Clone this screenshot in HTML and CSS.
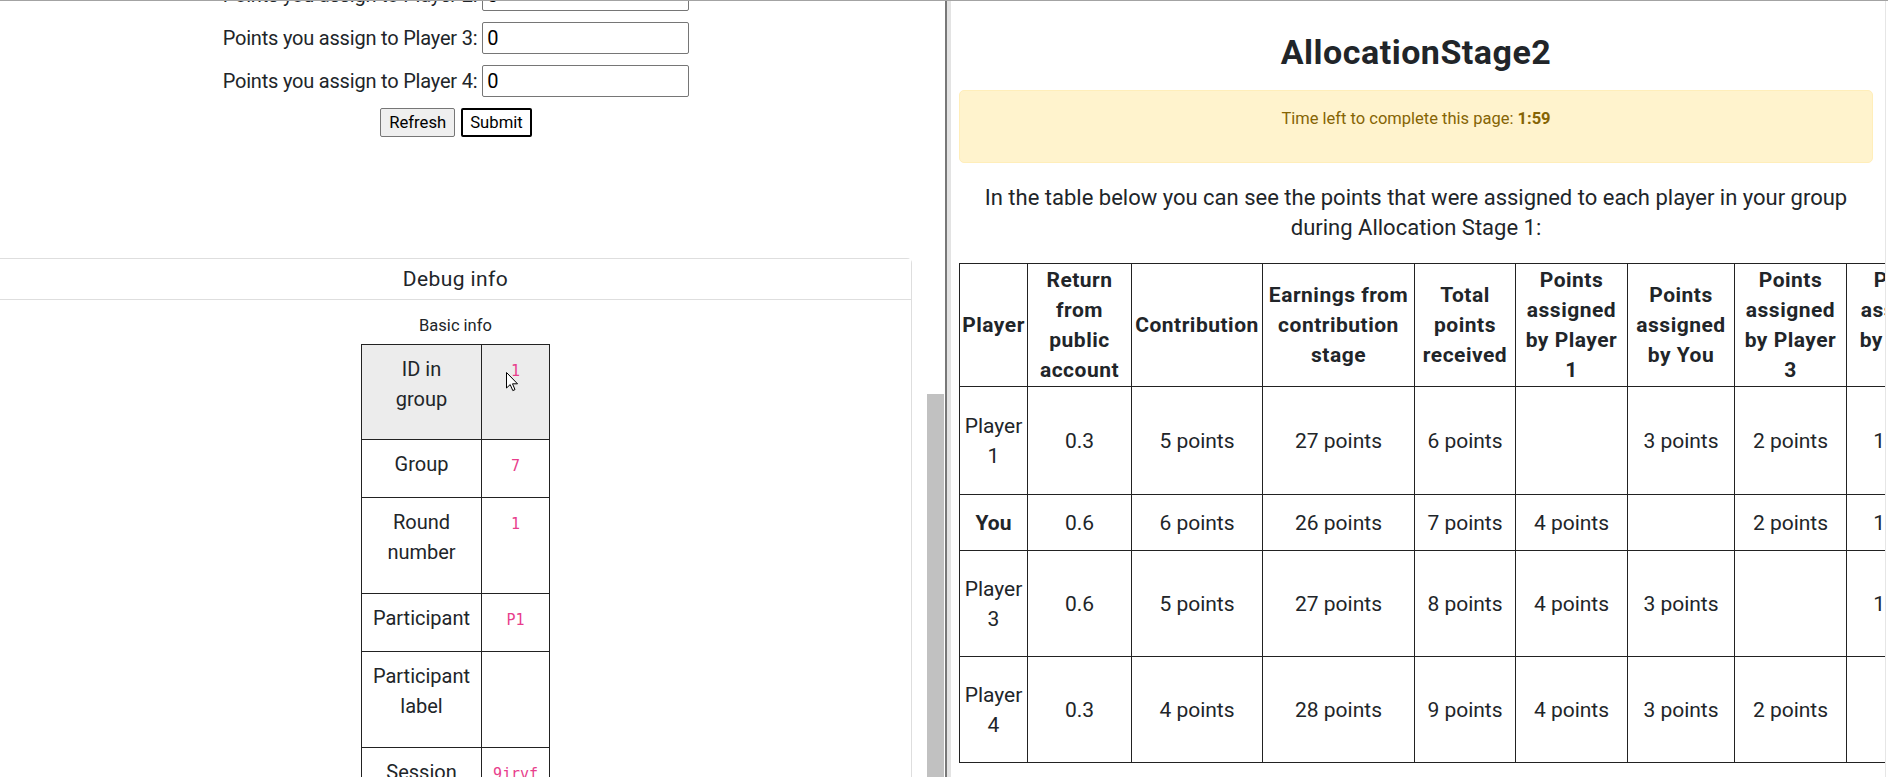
FILE: index.html
```html
<!DOCTYPE html>
<html lang="en">
<head>
<meta charset="utf-8">
<title>AllocationStage2</title>
<link rel="stylesheet" href="styles.css">
</head>
<body>
<div class="screen">
  <div class="topline"></div>
  <div class="panes">
    <div class="left">
      <div class="left-view">
        <form class="alloc">
          <div class="field"><label>Points you assign to Player 2:</label><input class="num" type="text" value="0"></div>
          <div class="field"><label>Points you assign to Player 3:</label><input class="num" type="text" value="0"></div>
          <div class="field"><label>Points you assign to Player 4:</label><input class="num" type="text" value="0"></div>
          <div class="buttons">
            <button type="button" class="btn">Refresh</button>
            <button type="button" class="btn btn-submit">Submit</button>
          </div>
        </form>
        <div class="debug">
          <div class="debug-head">Debug info</div>
          <div class="debug-body">
            <div class="debug-sub">Basic info</div>
            <table class="dtable">
              <colgroup><col class="dc1"><col class="dc2"></colgroup>
              <tr class="drow-first shaded"><th>ID in<br>group</th><td><code>1</code></td></tr>
              <tr class="drow-1"><th>Group</th><td><code>7</code></td></tr>
              <tr class="drow-2"><th>Round number</th><td><code>1</code></td></tr>
              <tr class="drow-1"><th>Participant</th><td><code>P1</code></td></tr>
              <tr class="drow-2"><th>Participant label</th><td></td></tr>
              <tr class="drow-2"><th>Session code</th><td><code>9jrvfk2m</code></td></tr>
            </table>
          </div>
        </div>
      </div>
      <div class="vscroll"><div class="vtrack"></div><div class="vthumb"></div></div>
    </div>
    <div class="divider"></div>
    <div class="divider-light"></div>
    <div class="right">
      <div class="right-inner">
        <h2 class="title">AllocationStage2</h2>
        <div class="alert">Time left to complete this page: <b>1:59</b></div>
        <p class="intro">In the table below you can see the points that were assigned to each player in your group during Allocation Stage 1:</p>
        <table class="results">
          <colgroup>
            <col class="w68"><col class="w104"><col class="w131"><col class="w152"><col class="w101"><col class="w112"><col class="w107"><col class="w112"><col class="w118">
          </colgroup>
          <tr class="h-head">
            <th>Player</th>
            <th>Return<br>from<br>public<br>account</th>
            <th>Contribution</th>
            <th>Earnings from<br>contribution<br>stage</th>
            <th>Total<br>points<br>received</th>
            <th>Points<br>assigned<br>by Player<br>1</th>
            <th>Points<br>assigned<br>by You</th>
            <th>Points<br>assigned<br>by Player<br>3</th>
            <th>Points<br>assigned<br>by Player<br>4</th>
          </tr>
          <tr class="h-tall1">
            <td>Player 1</td><td>0.3</td><td>5 points</td><td>27 points</td><td>6 points</td><td></td><td>3 points</td><td>2 points</td><td>1 point</td>
          </tr>
          <tr class="h-short">
            <td><b>You</b></td><td>0.6</td><td>6 points</td><td>26 points</td><td>7 points</td><td>4 points</td><td></td><td>2 points</td><td>1 point</td>
          </tr>
          <tr class="h-tall">
            <td>Player 3</td><td>0.6</td><td>5 points</td><td>27 points</td><td>8 points</td><td>4 points</td><td>3 points</td><td></td><td>1 point</td>
          </tr>
          <tr class="h-tall">
            <td>Player 4</td><td>0.3</td><td>4 points</td><td>28 points</td><td>9 points</td><td>4 points</td><td>3 points</td><td>2 points</td><td></td>
          </tr>
        </table>
      </div>
    </div>
    <div class="edge"></div>
  </div>
  <svg class="cursor" width="13" height="20" viewBox="0 0 13 20" aria-hidden="true">
    <path d="M0.5 0.5 L0.5 16 L4.2 12.6 L6.8 18.6 L9 17.6 L6.5 11.8 L11.5 11.8 Z" fill="#fff" stroke="#000" stroke-width="1" stroke-linejoin="round"/>
  </svg>
</div>
</body>
</html>
```
FILE: styles.css
```css
html, body {
  margin: 0;
  padding: 0;
  background: #fff;
}
body {
  font-family: Roboto, "Liberation Sans", sans-serif;
  color: #212529;
  font-size: 20px;
  line-height: 30px;
}
.screen {
  position: relative;
  width: 1888px;
  height: 777px;
  overflow: hidden;
  display: flex;
  flex-direction: column;
}
.topline {
  flex: none;
  height: 1px;
  background: #a3a3a3;
}
.panes {
  flex: 1;
  min-height: 0;
  display: flex;
}

/* ---------- left pane ---------- */
.left {
  flex: none;
  width: 945px;
  display: flex;
}
.left-view {
  width: 927px;
  box-sizing: border-box;
  padding-right: 15px;
  overflow: hidden;
}
.alloc {
  margin: -22px 0 0;
  display: flex;
  flex-direction: column;
  align-items: center;
  gap: 11px;
}
.field {
  display: flex;
  align-items: center;
  gap: 5px;
  height: 32px;
}
.field label {
  letter-spacing: -0.2px;
}
.num {
  box-sizing: border-box;
  width: 207px;
  height: 32px;
  border: 1px solid #767676;
  border-radius: 2px;
  padding: 1px 4px;
  font-family: Roboto, "Liberation Sans", sans-serif;
  font-size: 20px;
  color: #000;
  background: #fff;
}
.buttons {
  display: flex;
  gap: 6px;
}
.btn {
  box-sizing: border-box;
  height: 29px;
  padding: 0 8px;
  font-family: Roboto, "Liberation Sans", sans-serif;
  font-size: 16.67px;
  color: #000;
  background: #efefef;
  border: 1px solid #767676;
  border-radius: 2px;
}
.btn-submit {
  background: #fff;
  border: 2px solid #000;
  padding: 0 7px;
}
.debug {
  margin-top: 121px;
  border: 1px solid #dedede;
  border-left: 0;
  border-radius: 0 5px 5px 0;
}
.debug-head {
  padding: 5px 0;
  text-align: center;
  font-size: 21px;
  letter-spacing: 0.4px;
  border-bottom: 1px solid #dedede;
  background: #fff;
}
.debug-body {
  padding-top: 13px;
}
.debug-sub {
  font-size: 16.5px;
  line-height: 25px;
  text-align: center;
  margin-bottom: 6px;
}
.dtable {
  margin: 0 auto;
  table-layout: fixed;
  border-collapse: collapse;
  width: 188px;
}
.dc1 { width: 120px; }
.dc2 { width: 68px; }
.dtable th,
.dtable td {
  border: 1px solid #222;
  padding: 9px 8px 0;
  vertical-align: top;
  text-align: center;
  font-weight: 400;
}
.dtable .shaded th,
.dtable .shaded td {
  background: #ececec;
}
.drow-first { height: 95px; }
.drow-1 { height: 58px; }
.drow-2 { height: 96px; }
.dtable code {
  font-family: "DejaVu Sans Mono", "Liberation Mono", monospace;
  font-size: 15px;
  color: #e83e8c;
  word-break: break-all;
}
.vscroll {
  flex: none;
  width: 18px;
  display: flex;
  flex-direction: column;
  background: #fff;
}
.vtrack {
  height: 393px;
  flex: none;
}
.vthumb {
  flex: 1;
  width: 17px;
  background: #c1c1c1;
}

/* ---------- divider ---------- */
.divider {
  flex: none;
  width: 2px;
  background: #787878;
}
.divider-light {
  flex: none;
  width: 4px;
  background: #e3e3e3;
}

/* ---------- right pane ---------- */
.right {
  flex: none;
  width: 934px;
  overflow: hidden;
}
.right-inner {
  padding: 32px 12px 0 8px;
}
.title {
  margin: 0 0 19px;
  font-size: 34px;
  line-height: 38px;
  letter-spacing: 0.5px;
  font-weight: 700;
  text-align: center;
}
.alert {
  padding: 15px 20px 31px;
  margin-bottom: 20px;
  border: 1px solid #ffeeba;
  border-radius: 5px;
  background: #fff3cd;
  color: #856404;
  font-size: 16.5px;
  line-height: 25px;
  text-align: center;
}
.intro {
  margin: 0 0 20px;
  font-size: 22px;
  text-align: center;
}
.results {
  table-layout: fixed;
  border-collapse: collapse;
  width: 1005px;
  font-size: 21px;
}
.w68 { width: 68px; }
.w104 { width: 104px; }
.w131 { width: 131px; }
.w152 { width: 152px; }
.w101 { width: 101px; }
.w112 { width: 112px; }
.w107 { width: 107px; }
.w118 { width: 118px; }
.results th,
.results td {
  border: 1px solid #222;
  padding: 0 1px;
  text-align: center;
  vertical-align: middle;
  overflow: hidden;
}
.results th {
  font-weight: 700;
  letter-spacing: 0.5px;
  white-space: nowrap;
}
.h-head { height: 123px; }
.h-tall1 { height: 108px; }
.h-tall { height: 106px; }
.h-short { height: 56px; }

.edge {
  flex: none;
  width: 2px;
  border-left: 1px solid #e6e6e6;
  background: #fff;
}

.cursor {
  position: absolute;
  left: 506px;
  top: 372px;
}
```
